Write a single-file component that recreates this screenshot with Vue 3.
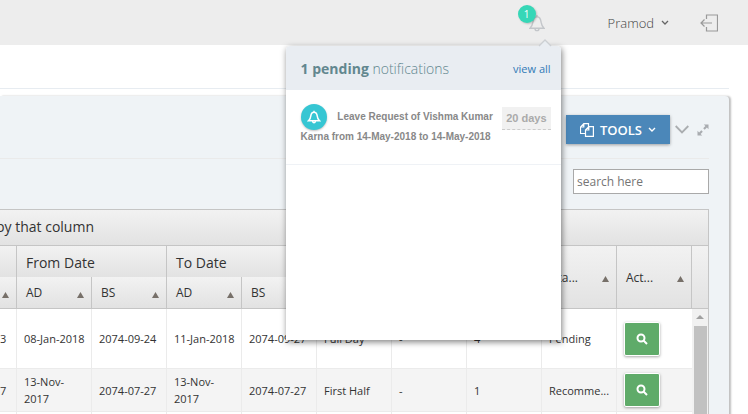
<script setup>
import { ref } from 'vue'

const search = ref('')
const rows = [
  { tall: true, cells: ['2074-09-23', '08-Jan-2018', '2074-09-24', '11-Jan-2018', '2074-09-27', 'Full Day', '-', '4', 'Pending'] },
  { tall: false, cells: ['2074-07-27', '13-Nov-2017', '2074-07-27', '13-Nov-2017', '2074-07-27', 'First Half', '-', '1', 'Recomme...'] },
]
</script>

<template>
  <div class="page">
    <header class="topbar">
      <div class="notify">
        <button class="bell" type="button" aria-label="Notifications">
          <svg width="16" height="18" viewBox="0 0 16 18" fill="none" stroke="#c3c6ca" stroke-width="1.4">
            <path d="M1 14.200h14c-1.700-1.500-2.500-3.200-2.900-6C11.700 4.800 10.500 2.700 8 2.700S4.300 4.800 3.900 8.200c-.4 2.800-1.200 4.500-2.900 6zM8 2.700V1M6 14.400c0 3 4 3 4 0" />
          </svg>
          <span class="count">1</span>
        </button>
        <section class="popup">
          <svg class="caret" width="14" height="8" viewBox="0 0 14 8">
            <path d="M0 8 7 1l7 7z" fill="#e9edf2" />
            <path d="M1 7 7 1l6 6" fill="none" stroke="#cccfd3" stroke-width="1.300" />
          </svg>
          <div class="popup-head">
            <h3><b>1 pending</b> notifications</h3>
            <a href="#">view all</a>
          </div>
          <div class="popup-body">
            <a class="item" href="#">
              <span class="days">20 days</span>
              <span class="disc">
                <svg width="14" height="14" viewBox="0 0 14 14" fill="none" stroke="#fff" stroke-width="1.500">
                  <path d="M1.500 10.800h11c-1.500-1.200-2-2.500-2.300-5C9.900 3.500 9 2.200 7 2.200S4.100 3.500 3.800 5.800c-.3 2.500-.8 3.800-2.300 5zM7 2.200V.8M5.700 11.500c.2 1.700 2.400 1.700 2.600 0" />
                </svg>
              </span>
              Leave Request of Vishma Kumar Karna from 14-May-2018 to 14-May-2018
            </a>
          </div>
        </section>
      </div>
      <button class="user" type="button">
        Pramod
        <svg width="8" height="6" viewBox="0 0 8 6" fill="none" stroke="#666" stroke-width="1.300"><path d="M1 1l3 3 3-3" /></svg>
      </button>
      <a class="logout" href="#" aria-label="Log out">
        <svg width="18" height="18" viewBox="0 0 18 18" fill="none" stroke="#999" stroke-width="1.200">
          <path d="M6.500 5V1h11v16h-11v-4M12 9H1M4.500 5.500 1 9l3.500 3.500" />
        </svg>
      </a>
    </header>

    <main class="content">
      <div class="page-bar"></div>
      <section class="panel">
        <div class="panel-title">
          <button class="tools" type="button">
            <svg width="14" height="14" viewBox="0 0 14 14" fill="none" stroke="#fff" stroke-width="1.200">
              <path d="M5.500 10.500h-5V4L3.800.7h4.700v3M3.800.7V4H.5M5.500 13.300V7l3.300-3.300h4.600v9.600zM8.800 3.700V7H5.500" />
            </svg>
            TOOLS
            <svg width="8" height="6" viewBox="0 0 8 6" fill="none" stroke="#fff" stroke-width="1.400"><path d="M1 1l3 3 3-3" /></svg>
          </button>
          <button class="icon" type="button" aria-label="Collapse">
            <svg width="14" height="9" viewBox="0 0 14 9" fill="none" stroke="#aaadb0" stroke-width="1.800"><path d="M.7 1 7 7.500 13.300 1" /></svg>
          </button>
          <button class="icon" type="button" aria-label="Full screen">
            <svg width="12" height="12" viewBox="0 0 12 12" fill="#a9acb0">
              <path d="M6.800.5h4.700v4.700L9.900 3.600 7.700 5.800 6.200 4.300l2.200-2.200zM.5 6.800l1.600 1.600 2.200-2.200 1.500 1.500-2.200 2.200 1.600 1.600H.5z" />
            </svg>
          </button>
        </div>
        <div class="search">
          <input v-model="search" type="text" placeholder="search here" aria-label="Search">
        </div>

        <div class="grid">
          <div class="group-bar">by that column</div>
          <div class="grid-head">
            <table>
              <thead>
                <tr class="upper">
                  <th></th>
                  <th colspan="2">From Date</th>
                  <th colspan="2">To Date</th>
                  <th rowspan="2"></th>
                  <th rowspan="2"></th>
                  <th rowspan="2"></th>
                  <th v-for="name in ['Sta...', 'Act...']" :key="name" rowspan="2" class="small">
                    <span class="sort">{{ name }}<svg width="7" height="6" viewBox="0 0 7 6"><path d="M0 6 3.500 0 7 6z" fill="#777069" /></svg></span>
                  </th>
                </tr>
                <tr class="lower">
                  <th v-for="(name, i) in ['', 'AD', 'BS', 'AD', 'BS']" :key="i" class="small">
                    <span class="sort">{{ name }}<svg width="7" height="6" viewBox="0 0 7 6"><path d="M0 6 3.500 0 7 6z" fill="#777069" /></svg></span>
                  </th>
                </tr>
              </thead>
            </table>
          </div>
          <div class="grid-body">
            <table>
              <tbody>
                <tr v-for="(row, r) in rows" :key="r" :class="{ tall: row.tall }">
                  <td v-for="(cell, c) in row.cells" :key="c">{{ cell }}</td>
                  <td>
                    <button class="view" type="button" aria-label="View">
                      <svg width="12" height="12" viewBox="0 0 12 12" fill="none" stroke="#fff" stroke-width="2">
                        <circle cx="5" cy="5" r="3.500" /><path d="M7.500 7.500l3.500 3.500" />
                      </svg>
                    </button>
                  </td>
                </tr>
                <tr><td v-for="n in 10" :key="n"></td></tr>
              </tbody>
            </table>
            <div class="scrollbar">
              <svg width="8" height="4" viewBox="0 0 8 4"><path d="M0 4 4 0l4 4z" fill="#a0a0a0" /></svg>
              <div class="thumb"></div>
            </div>
          </div>
        </div>
      </section>
    </main>
  </div>
</template>

<style>
body {
  margin: 0;
}
</style>

<style scoped>
.page {
  height: 100vh;
  overflow: hidden;
  background: #fff;
  color: #333;
  font: 11px/17px "Open Sans", sans-serif;
}
.page * {
  box-sizing: border-box;
}
button {
  padding: 0;
  border: 0;
  background: none;
  font-family: inherit;
  cursor: pointer;
}
svg {
  display: block;
}
a {
  text-decoration: none;
}
.topbar {
  display: flex;
  justify-content: flex-end;
  align-items: center;
  height: 45px;
  padding-right: 30px;
  background: #ededed;
}
.notify {
  position: relative;
  display: flex;
  align-items: center;
  height: 45px;
  margin-right: 63px;
}
.bell {
  position: relative;
}
.count {
  position: absolute;
  top: -9px;
  left: -11px;
  width: 18px;
  height: 18px;
  border-radius: 50%;
  background: #36d7b7;
  box-shadow: 1px 1px 2px rgba(0, 0, 0, 0.2);
  color: #fff;
  font-size: 10px;
  line-height: 18px;
  text-align: center;
}
.popup {
  position: absolute;
  z-index: 2;
  top: 46px;
  right: -16px;
  width: 275px;
  border-radius: 4px 4px 0 0;
  background: #fff;
  box-shadow: 1px 2px 6px rgba(0, 0, 0, 0.5);
}
.caret {
  position: absolute;
  top: -7px;
  right: 9px;
}
.popup-head {
  display: flex;
  align-items: center;
  justify-content: space-between;
  height: 44px;
  padding: 0 10px 0 15px;
  border-radius: 4px 4px 0 0;
  background: #e9edf2;
}
.popup-head h3 {
  margin: 0;
  color: #62878f;
  font-size: 14px;
  font-weight: 300;
}
.popup-head b {
  font-weight: 700;
}
.popup-head a {
  color: #337ab7;
}
.popup-body {
  min-height: 250px;
}
.item {
  display: block;
  padding: 17px 10px 17px 15px;
  border-bottom: 1px solid #eff2f6;
  color: #888;
  font: bold 10px/20px "Liberation Sans", Arial, sans-serif;
}
.days {
  float: right;
  padding: 0 4px;
  border-bottom: 1px dashed #ccc;
  background: #f1f1f1;
  color: #aaa;
  font-size: 11px;
  line-height: 22px;
}
.disc {
  display: inline-flex;
  align-items: center;
  justify-content: center;
  width: 26px;
  height: 26px;
  margin: -3px 8px -3px 0;
  border-radius: 50%;
  background: #36c6d3;
  box-shadow: 0 1px 2px rgba(0, 0, 0, 0.25);
  vertical-align: middle;
}
.user {
  display: flex;
  align-items: center;
  gap: 7px;
  margin-right: 31px;
  color: #444;
  font-size: 13px;
  font-weight: 300;
}
.content {
  padding-right: 19px;
}
.page-bar {
  height: 44px;
  border-bottom: 1px solid #e7ecf1;
}
.panel {
  margin-top: 7px;
  padding: 12px 20px 0 0;
  border-radius: 0 4px 0 0;
  background: #eff3f6;
  box-shadow: 2px 0 2px rgba(0, 0, 0, 0.25);
}
.panel-title {
  display: flex;
  align-items: flex-start;
  justify-content: flex-end;
  height: 51px;
  padding-top: 7px;
  border-bottom: 1px solid #eaeaea;
}
.tools {
  display: flex;
  align-items: center;
  justify-content: center;
  gap: 6px;
  width: 104px;
  height: 29px;
  background: #4b87b9;
  box-shadow: 0 1px 3px rgba(0, 0, 0, 0.35);
  color: #fff;
  font-size: 13px;
  font-weight: 600;
}
.icon {
  display: flex;
  align-items: center;
  height: 29px;
  margin-left: 5px;
}
.icon + .icon {
  margin-left: 8px;
}
.search {
  display: flex;
  justify-content: flex-end;
  padding: 10px 0 15px;
}
.search input {
  width: 136px;
  height: 25px;
  padding: 0 3px;
  border: 1px solid #a9a9a9;
  background: #fff;
  font: 12px "Open Sans", sans-serif;
}
.search input::placeholder {
  color: #757575;
}
.grid {
  margin-left: -59px;
  border: 1px solid #c5c5c5;
  background: #fff;
}
.group-bar,
th,
.grid-head {
  background: linear-gradient(#f2f2f2, #e2e2e2);
}
.group-bar {
  height: 36px;
  padding-left: 54px;
  border-bottom: 1px solid #c5c5c5;
  font-size: 14px;
  line-height: 34px;
}
.grid-head {
  padding-right: 16px;
  border-bottom: 1px solid #c5c5c5;
}
table {
  width: 100%;
  border-spacing: 0;
  table-layout: fixed;
}
th {
  padding: 2px 9px 0;
  border-right: 1px solid #c5c5c5;
  font-size: 14px;
  font-weight: 400;
  text-align: left;
}
th.small {
  padding: 0 7px 0 9px;
  font-size: 12px;
}
.upper,
.lower {
  height: 31px;
}
.sort {
  display: flex;
  align-items: center;
  justify-content: space-between;
}
.sort svg {
  margin-top: 4px;
}
.sort svg:only-child {
  margin-left: auto;
}
.grid-body {
  display: flex;
}
tbody tr {
  height: 43px;
}
tbody .tall {
  height: 60px;
}
td {
  padding: 4px 5px 4px 7px;
  border-right: 1px solid #ebebeb;
  border-bottom: 1px solid #ebebeb;
}
td:last-child {
  border-right: 0;
}
tbody tr:nth-child(even) {
  background: #f4f4f4;
}
.view {
  display: flex;
  align-items: center;
  justify-content: center;
  width: 36px;
  height: 34px;
  border: 1px solid #fff;
  border-radius: 2px;
  background: #5fab69;
  box-shadow: 0 1px 3px rgba(0, 0, 0, 0.35);
}
.scrollbar {
  display: flex;
  flex: none;
  flex-direction: column;
  align-items: center;
  gap: 7px;
  width: 16px;
  padding-top: 6px;
  background: #f1f1f1;
}
.thumb {
  flex: 1;
  width: 13px;
  background: #c1c1c1;
}
</style>
